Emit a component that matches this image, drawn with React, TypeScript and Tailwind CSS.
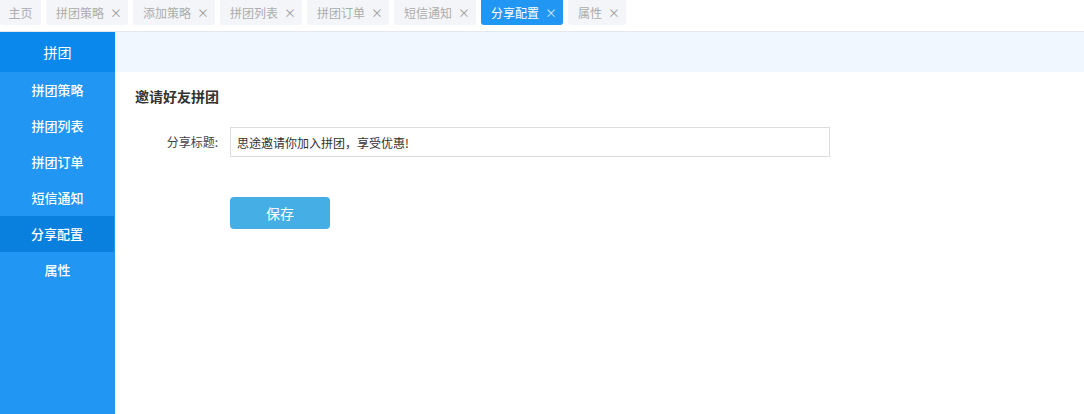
import React from "react";

const tabs = [
  { name: "拼团策略" },
  { name: "添加策略" },
  { name: "拼团列表" },
  { name: "拼团订单" },
  { name: "短信通知" },
  { name: "分享配置", active: true },
  { name: "属性", short: true },
];

const menu = ["拼团策略", "拼团列表", "拼团订单", "短信通知", "分享配置", "属性"];

export default function App() {
  return (
    <div
      className="w-[1084px] h-[414px] bg-white flex flex-col overflow-hidden"
      style={{ fontFamily: '"Microsoft YaHei", "Noto Sans CJK SC", "Liberation Sans", sans-serif' }}
    >
      <div className="h-[32px] flex items-start gap-[5px] border-b border-[#e4e9f0] shrink-0">
        <div className="h-[25px] w-[41px] flex items-center justify-center bg-[#f4f5f8] rounded-b-[3px] text-[12px] text-[#acacac]">
          主页
        </div>
        {tabs.map((t) => (
          <div
            key={t.name}
            className={
              "h-[25px] flex items-center justify-between pl-[10px] pr-[6px] rounded-b-[3px] text-[12px] " +
              (t.short ? "w-[58px] " : "w-[82px] ") +
              (t.active ? "bg-[#2196f3] text-white" : "bg-[#f4f5f8] text-[#acacac]")
            }
          >
            <span>{t.name}</span>
            <span
              className={
                "text-[12px] leading-none " + (t.active ? "text-[#d6eafd]" : "text-[#9a9a9a]")
              }
            >
              ×
            </span>
          </div>
        ))}
      </div>
      <div className="flex flex-1">
        <div className="w-[115px] bg-[#2196f3] flex flex-col shrink-0">
          <div className="h-[40px] bg-[#0a88eb] flex items-center justify-center text-white text-[14px]">
            拼团
          </div>
          {menu.map((m) => (
            <div
              key={m}
              className={
                "h-[36px] flex items-center justify-center text-white text-[13px] font-medium " +
                (m === "分享配置" ? "bg-[#0a80de] mr-[1px]" : "")
              }
            >
              {m}
            </div>
          ))}
        </div>
        <div className="flex-1 flex flex-col">
          <div className="h-[40px] bg-[#f0f7ff]" />
          <div className="pl-[20px] pt-[14px]">
            <div className="text-[14px] font-bold text-[#333] leading-[20px]">邀请好友拼团</div>
            <div className="flex items-center mt-[21px]">
              <div className="w-[83px] text-right text-[12px] text-[#444]">分享标题:</div>
              <input
                readOnly
                value="思途邀请你加入拼团，享受优惠!"
                className="ml-[12px] w-[600px] h-[30px] border border-[#dddddd] px-[6px] text-[12px] text-[#333] outline-none"
              />
            </div>
            <div className="pl-[95px] mt-[40px]">
              <button className="w-[100px] h-[32px] bg-[#45aee5] rounded-[4px] text-white text-[14px]">
                保存
              </button>
            </div>
          </div>
        </div>
      </div>
    </div>
  );
}
